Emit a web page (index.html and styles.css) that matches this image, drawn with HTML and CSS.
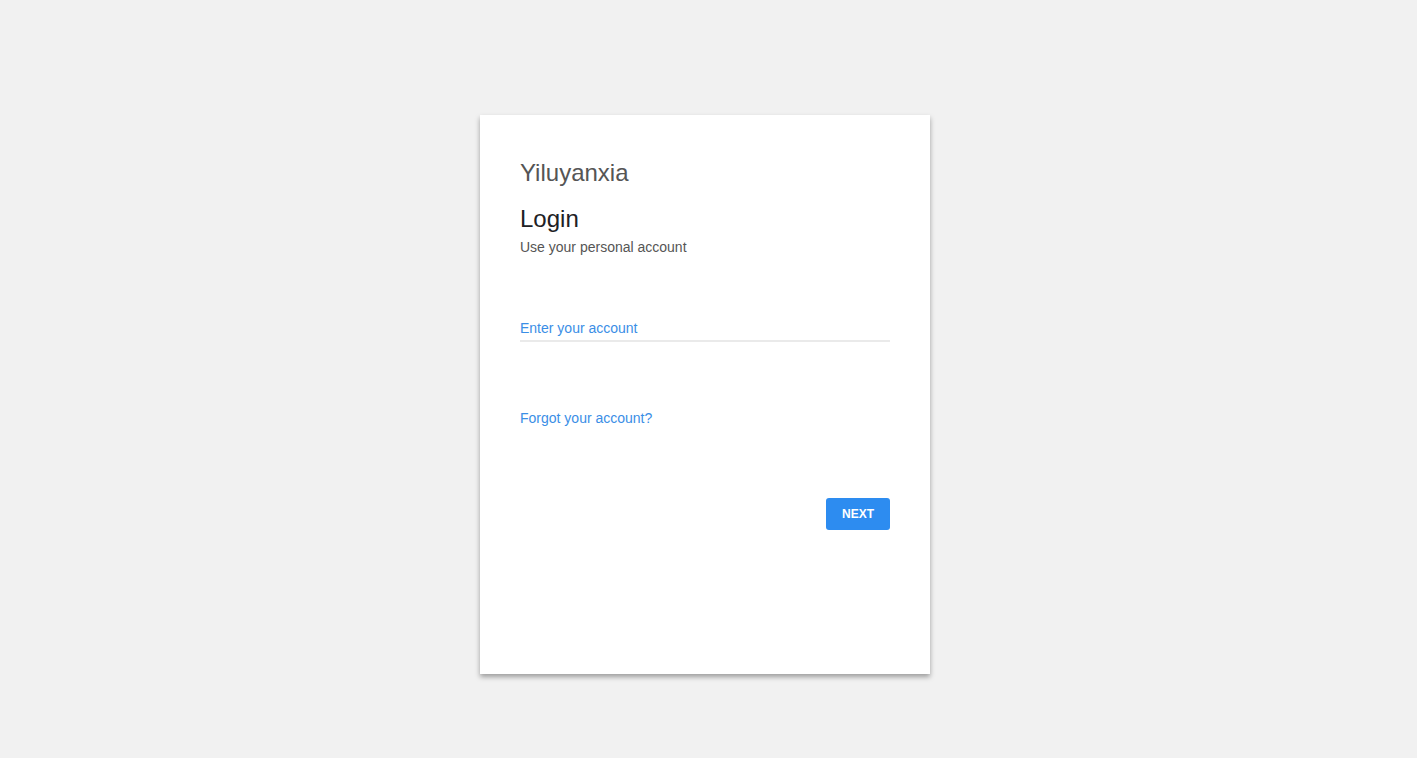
FILE: index.html
```html
<!DOCTYPE html>
<html>
<head>
<meta charset="utf-8">
<link rel="stylesheet" href="styles.css">
</head>
<body>
<div class="page">
  <div class="card">
    <div class="brand">Yiluyanxia</div>
    <h1 class="title">Login</h1>
    <div class="subtitle">Use your personal account</div>
    <div class="field">
      <input class="input" type="text" placeholder="Enter your account">
    </div>
    <a class="forgot" href="#">Forgot your account?</a>
    <div class="actions">
      <button class="next">NEXT</button>
    </div>
  </div>
</div>
</body>
</html>
```
FILE: styles.css
```css
html, body {
  margin: 0;
  padding: 0;
  background: #f1f1f1;
  font-family: "Liberation Sans", Arial, sans-serif;
}
.page {
  height: 758px;
  display: flex;
  justify-content: center;
  padding-top: 115px;
  padding-right: 7px;
  box-sizing: border-box;
}
.card {
  width: 450px;
  height: 559px;
  background: #fff;
  box-shadow: 0 3px 5px rgba(0,0,0,0.35);
  padding: 40px 40px 0;
  box-sizing: border-box;
  display: flex;
  flex-direction: column;
}
.brand {
  font-size: 24px;
  line-height: 36px;
  color: #555;
}
.title {
  margin: 0;
  margin-top: 14px;
  font-size: 24px;
  line-height: 28px;
  font-weight: normal;
  color: #202124;
}
.subtitle {
  font-size: 14px;
  line-height: 18px;
  color: #555;
  margin-top: 5px;
}
.field {
  margin-top: 60px;
}
.input {
  width: 100%;
  box-sizing: border-box;
  border: none;
  border-bottom: 2px solid #eaeaea;
  outline: none;
  padding: 3px 0 3px;
  font-family: inherit;
  font-size: 14px;
  line-height: 18px;
  color: #333;
}
.input::placeholder {
  color: #3a8ee6;
  opacity: 1;
}
.forgot {
  margin-top: 67px;
  font-size: 14px;
  line-height: 18px;
  color: #3a8ee6;
  text-decoration: none;
  align-self: flex-start;
}
.actions {
  display: flex;
  justify-content: flex-end;
  margin-top: 71px;
}
.next {
  width: 64px;
  height: 32px;
  border: none;
  border-radius: 3px;
  background: #2d8cf0;
  color: #fff;
  font-family: inherit;
  font-size: 12px;
  font-weight: bold;
  padding: 0;
}
```
